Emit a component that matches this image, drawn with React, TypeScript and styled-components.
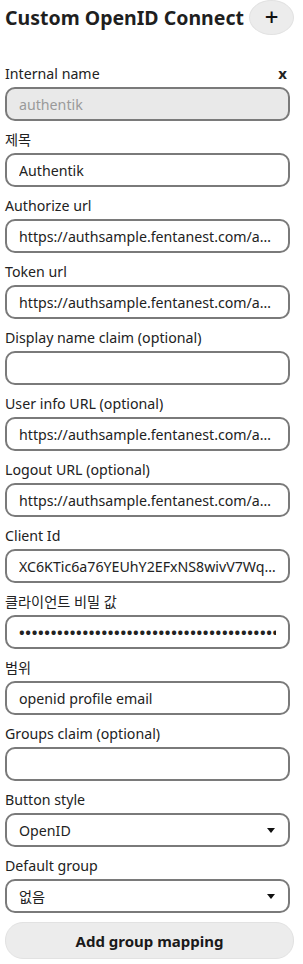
import { createGlobalStyle } from 'styled-components'
import styled from 'styled-components'

const GlobalStyle = createGlobalStyle`
  body {
    margin: 0;
    background: #fff;
    font-family: 'Noto Sans', 'Noto Sans CJK KR', sans-serif;
    color: #222;
  }
`

const Page = styled.div`
  display: flex;
  flex-direction: column;
  width: 285px;
  padding: 0 5px;
`

const Header = styled.div`
  display: flex;
  align-items: center;
  justify-content: space-between;
  height: 35px;
  margin-right: -4px;
`

const Title = styled.h2`
  margin: 0;
  font-size: 19.5px;
  font-weight: 700;
  color: #1f1f1f;
`

const PlusButton = styled.button`
  width: 45px;
  height: 35px;
  padding: 0 0 2px;
  border: 1px solid #e2e2e2;
  border-radius: 50%;
  background: #ececec;
  color: #111;
  font-size: 24px;
  font-weight: 500;
  line-height: 1;
  font-family: 'Noto Sans', sans-serif;
`

const Form = styled.div`
  display: flex;
  flex-direction: column;
  margin-top: 28px;
`

const Field = styled.div`
  display: flex;
  flex-direction: column;
`

const LabelRow = styled.div<{ first?: boolean }>`
  display: flex;
  justify-content: space-between;
  align-items: center;
  height: 20px;
  margin: ${(p) => (p.first ? '0 0 4px' : '8px 0 4px')};
`

const Label = styled.label`
  font-size: 14.2px;
  color: #222;
`

const Remove = styled.span`
  font-size: 15px;
  font-weight: 700;
  margin-right: 3px;
`

const Input = styled.input`
  box-sizing: border-box;
  width: 285px;
  height: 34px;
  padding: 0 12px;
  border: 2px solid #7a7a7a;
  border-radius: 10px;
  background: #fff;
  font-family: inherit;
  font-size: 14.2px;
  color: #222;
  text-overflow: ellipsis;
  outline: none;

  &:disabled {
    background: #e9e9e9;
    color: #9a9a9a;
  }

  &[type='password'] {
    font-size: 15px;
    font-weight: 700;
    letter-spacing: 0.7px;
    text-overflow: clip;
  }
`

const SelectWrap = styled.div`
  position: relative;
  width: 285px;
`

const Select = styled.select`
  box-sizing: border-box;
  width: 285px;
  height: 34px;
  padding: 0 12px;
  border: 2px solid #7a7a7a;
  border-radius: 10px;
  background: #fff;
  font-family: inherit;
  font-size: 14.2px;
  color: #222;
  appearance: none;
  outline: none;
`

const Caret = styled.span`
  position: absolute;
  right: 15px;
  top: 15px;
  width: 0;
  height: 0;
  border-left: 4px solid transparent;
  border-right: 4px solid transparent;
  border-top: 5px solid #111;
  pointer-events: none;
`

const WideButton = styled.button`
  box-sizing: border-box;
  width: 289px;
  height: 37px;
  margin-top: 9px;
  border: 1px solid #e2e2e2;
  border-radius: 18px;
  background: #ececec;
  font-family: inherit;
  font-size: 15px;
  font-weight: 700;
  color: #1a1a1a;
`

type Item = {
  label: string
  value?: string
  type?: 'text' | 'password'
  disabled?: boolean
  options?: string[]
}

const host = 'https://authsample.fentanest.com/application/o/'

const fields: Item[] = [
  { label: '제목', value: 'Authentik' },
  { label: 'Authorize url', value: host + 'authorize/' },
  { label: 'Token url', value: host + 'token/' },
  { label: 'Display name claim (optional)', value: '' },
  { label: 'User info URL (optional)', value: host + 'userinfo/' },
  { label: 'Logout URL (optional)', value: host + 'authentik/end-session/' },
  { label: 'Client Id', value: 'XC6KTic6a76YEUhY2EFxNS8wivV7WqzLmP3dRt' },
  {
    label: '클라이언트 비밀 값',
    value: 'abcdefghijklmnopqrstuvwxyz0123456789abcdefghijklmnopqrstuvwxyz',
    type: 'password',
  },
  { label: '범위', value: 'openid profile email' },
  { label: 'Groups claim (optional)', value: '' },
  { label: 'Button style', options: ['OpenID'] },
  { label: 'Default group', options: ['없음'] },
]

export default function App() {
  return (
    <>
      <GlobalStyle />
      <Page>
        <Header>
          <Title>Custom OpenID Connect</Title>
          <PlusButton>+</PlusButton>
        </Header>
        <Form>
          <Field>
            <LabelRow first>
              <Label>Internal name</Label>
              <Remove>x</Remove>
            </LabelRow>
            <Input value="authentik" disabled readOnly />
          </Field>
          {fields.map((f) => (
            <Field key={f.label}>
              <LabelRow>
                <Label>{f.label}</Label>
              </LabelRow>
              {f.options ? (
                <SelectWrap>
                  <Select defaultValue={f.options[0]}>
                    {f.options.map((o) => (
                      <option key={o}>{o}</option>
                    ))}
                  </Select>
                  <Caret />
                </SelectWrap>
              ) : (
                <Input type={f.type ?? 'text'} value={f.value} readOnly />
              )}
            </Field>
          ))}
          <WideButton>Add group mapping</WideButton>
        </Form>
      </Page>
    </>
  )
}
